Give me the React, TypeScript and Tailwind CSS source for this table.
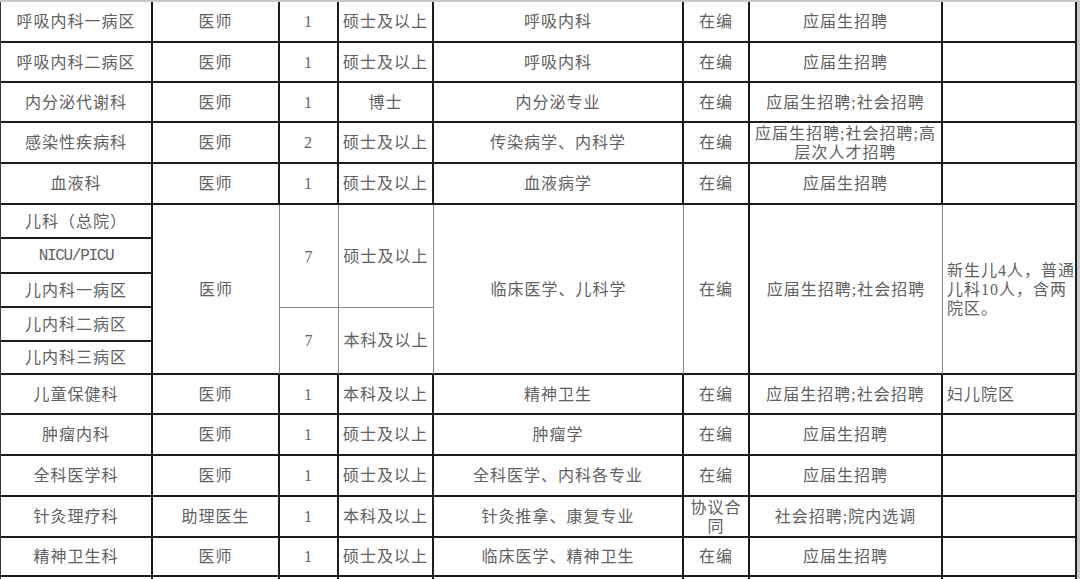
import React from "react";

const R2 = "border-r-2 border-r-[#1c1c1c]";
const R1 = "border-r border-r-[#8a8a8a]";
const B2 = "border-b-2 border-b-[#1c1c1c]";
const B1 = "border-b border-b-[#8a8a8a]";

const base =
  "flex items-center justify-center text-center whitespace-nowrap overflow-hidden";

type CellProps = {
  children?: React.ReactNode;
  r?: string;
  b?: string;
  extra?: string;
  left?: boolean;
};

function Cell({ children, r = R2, b = B2, extra = "", left = false }: CellProps) {
  return (
    <div
      className={`${left ? "flex items-center justify-start text-left whitespace-nowrap overflow-hidden pl-[4px]" : base} ${r} ${b} ${extra}`}
    >
      <div>{children}</div>
    </div>
  );
}

type Row = [string, string, string, string, string, React.ReactNode, React.ReactNode, string];

const topRows: Row[] = [
  ["呼吸内科一病区", "医师", "1", "硕士及以上", "呼吸内科", "在编", "应届生招聘", ""],
  ["呼吸内科二病区", "医师", "1", "硕士及以上", "呼吸内科", "在编", "应届生招聘", ""],
  ["内分泌代谢科", "医师", "1", "博士", "内分泌专业", "在编", "应届生招聘;社会招聘", ""],
  [
    "感染性疾病科",
    "医师",
    "2",
    "硕士及以上",
    "传染病学、内科学",
    "在编",
    <>
      应届生招聘;社会招聘;高
      <br />
      层次人才招聘
    </>,
    "",
  ],
  ["血液科", "医师", "1", "硕士及以上", "血液病学", "在编", "应届生招聘", ""],
];

const bottomRows: Row[] = [
  ["儿童保健科", "医师", "1", "本科及以上", "精神卫生", "在编", "应届生招聘;社会招聘", "妇儿院区"],
  ["肿瘤内科", "医师", "1", "硕士及以上", "肿瘤学", "在编", "应届生招聘", ""],
  ["全科医学科", "医师", "1", "硕士及以上", "全科医学、内科各专业", "在编", "应届生招聘", ""],
  [
    "针灸理疗科",
    "助理医生",
    "1",
    "本科及以上",
    "针灸推拿、康复专业",
    <>
      协议合
      <br />
      同
    </>,
    "社会招聘;院内选调",
    "",
  ],
  ["精神卫生科", "医师", "1", "硕士及以上", "临床医学、精神卫生", "在编", "应届生招聘", ""],
];

function renderRow(row: Row, key: string) {
  return (
    <React.Fragment key={key}>
      <Cell>{row[0]}</Cell>
      <Cell>{row[1]}</Cell>
      <Cell>{row[2]}</Cell>
      <Cell>{row[3]}</Cell>
      <Cell>{row[4]}</Cell>
      <Cell>{row[5]}</Cell>
      <Cell>{row[6]}</Cell>
      <Cell left>{row[7]}</Cell>
    </React.Fragment>
  );
}

export default function App() {
  return (
    <div className="w-[1080px] h-[579px] overflow-hidden bg-white font-['Liberation_Serif','Noto_Sans_CJK_SC',serif] text-[16px] leading-[19px] tracking-[1px] text-[#616161]">
      <div className="h-[2px] bg-[#c8c8c8]" />
      <div className="flex">
        <div className="w-[1077px] border-l border-l-[#3a3a3a] grid grid-cols-[152px_127px_59px_95px_250px_66px_193px_134px] grid-rows-[41px_40px_40px_41px_41px_34px_35px_34px_34px_33px_40px_41px_41px_41px_39px_60px]">
          {topRows.map((r, i) => renderRow(r, "t" + i))}

          {/* merged pediatric block: row 6 */}
          <Cell>儿科（总院）</Cell>
          <Cell r={R1} extra="row-span-5">医师</Cell>
          <Cell r={R1} b={B1} extra="row-span-3">7</Cell>
          <Cell r={R1} b={B1} extra="row-span-3">硕士及以上</Cell>
          <Cell r={R1} extra="row-span-5">临床医学、儿科学</Cell>
          <Cell extra="row-span-5">在编</Cell>
          <Cell r={R1} extra="row-span-5">应届生招聘;社会招聘</Cell>
          <Cell left extra="row-span-5">
            新生儿4人，普通
            <br />
            儿科10人，含两
            <br />
            院区。
          </Cell>
          {/* row 7 */}
          <Cell>
            <span className="font-['Liberation_Mono',monospace] text-[16px] tracking-[-1.3px]">NICU/PICU</span>
          </Cell>
          {/* row 8 */}
          <Cell>儿内科一病区</Cell>
          {/* row 9 */}
          <Cell>儿内科二病区</Cell>
          <Cell r={R1} extra="row-span-2">7</Cell>
          <Cell r={R1} extra="row-span-2">本科及以上</Cell>
          {/* row 10 */}
          <Cell>儿内科三病区</Cell>

          {bottomRows.map((r, i) => renderRow(r, "b" + i))}

          {/* partial row cut off at the bottom */}
          <Cell b="" />
          <Cell b="" />
          <Cell b="" />
          <Cell b="" />
          <Cell b="" />
          <Cell b="" />
          <Cell b="" />
          <Cell b="" />
        </div>
        <div className="w-[3px] bg-[#c8c8c8]" />
      </div>
    </div>
  );
}
